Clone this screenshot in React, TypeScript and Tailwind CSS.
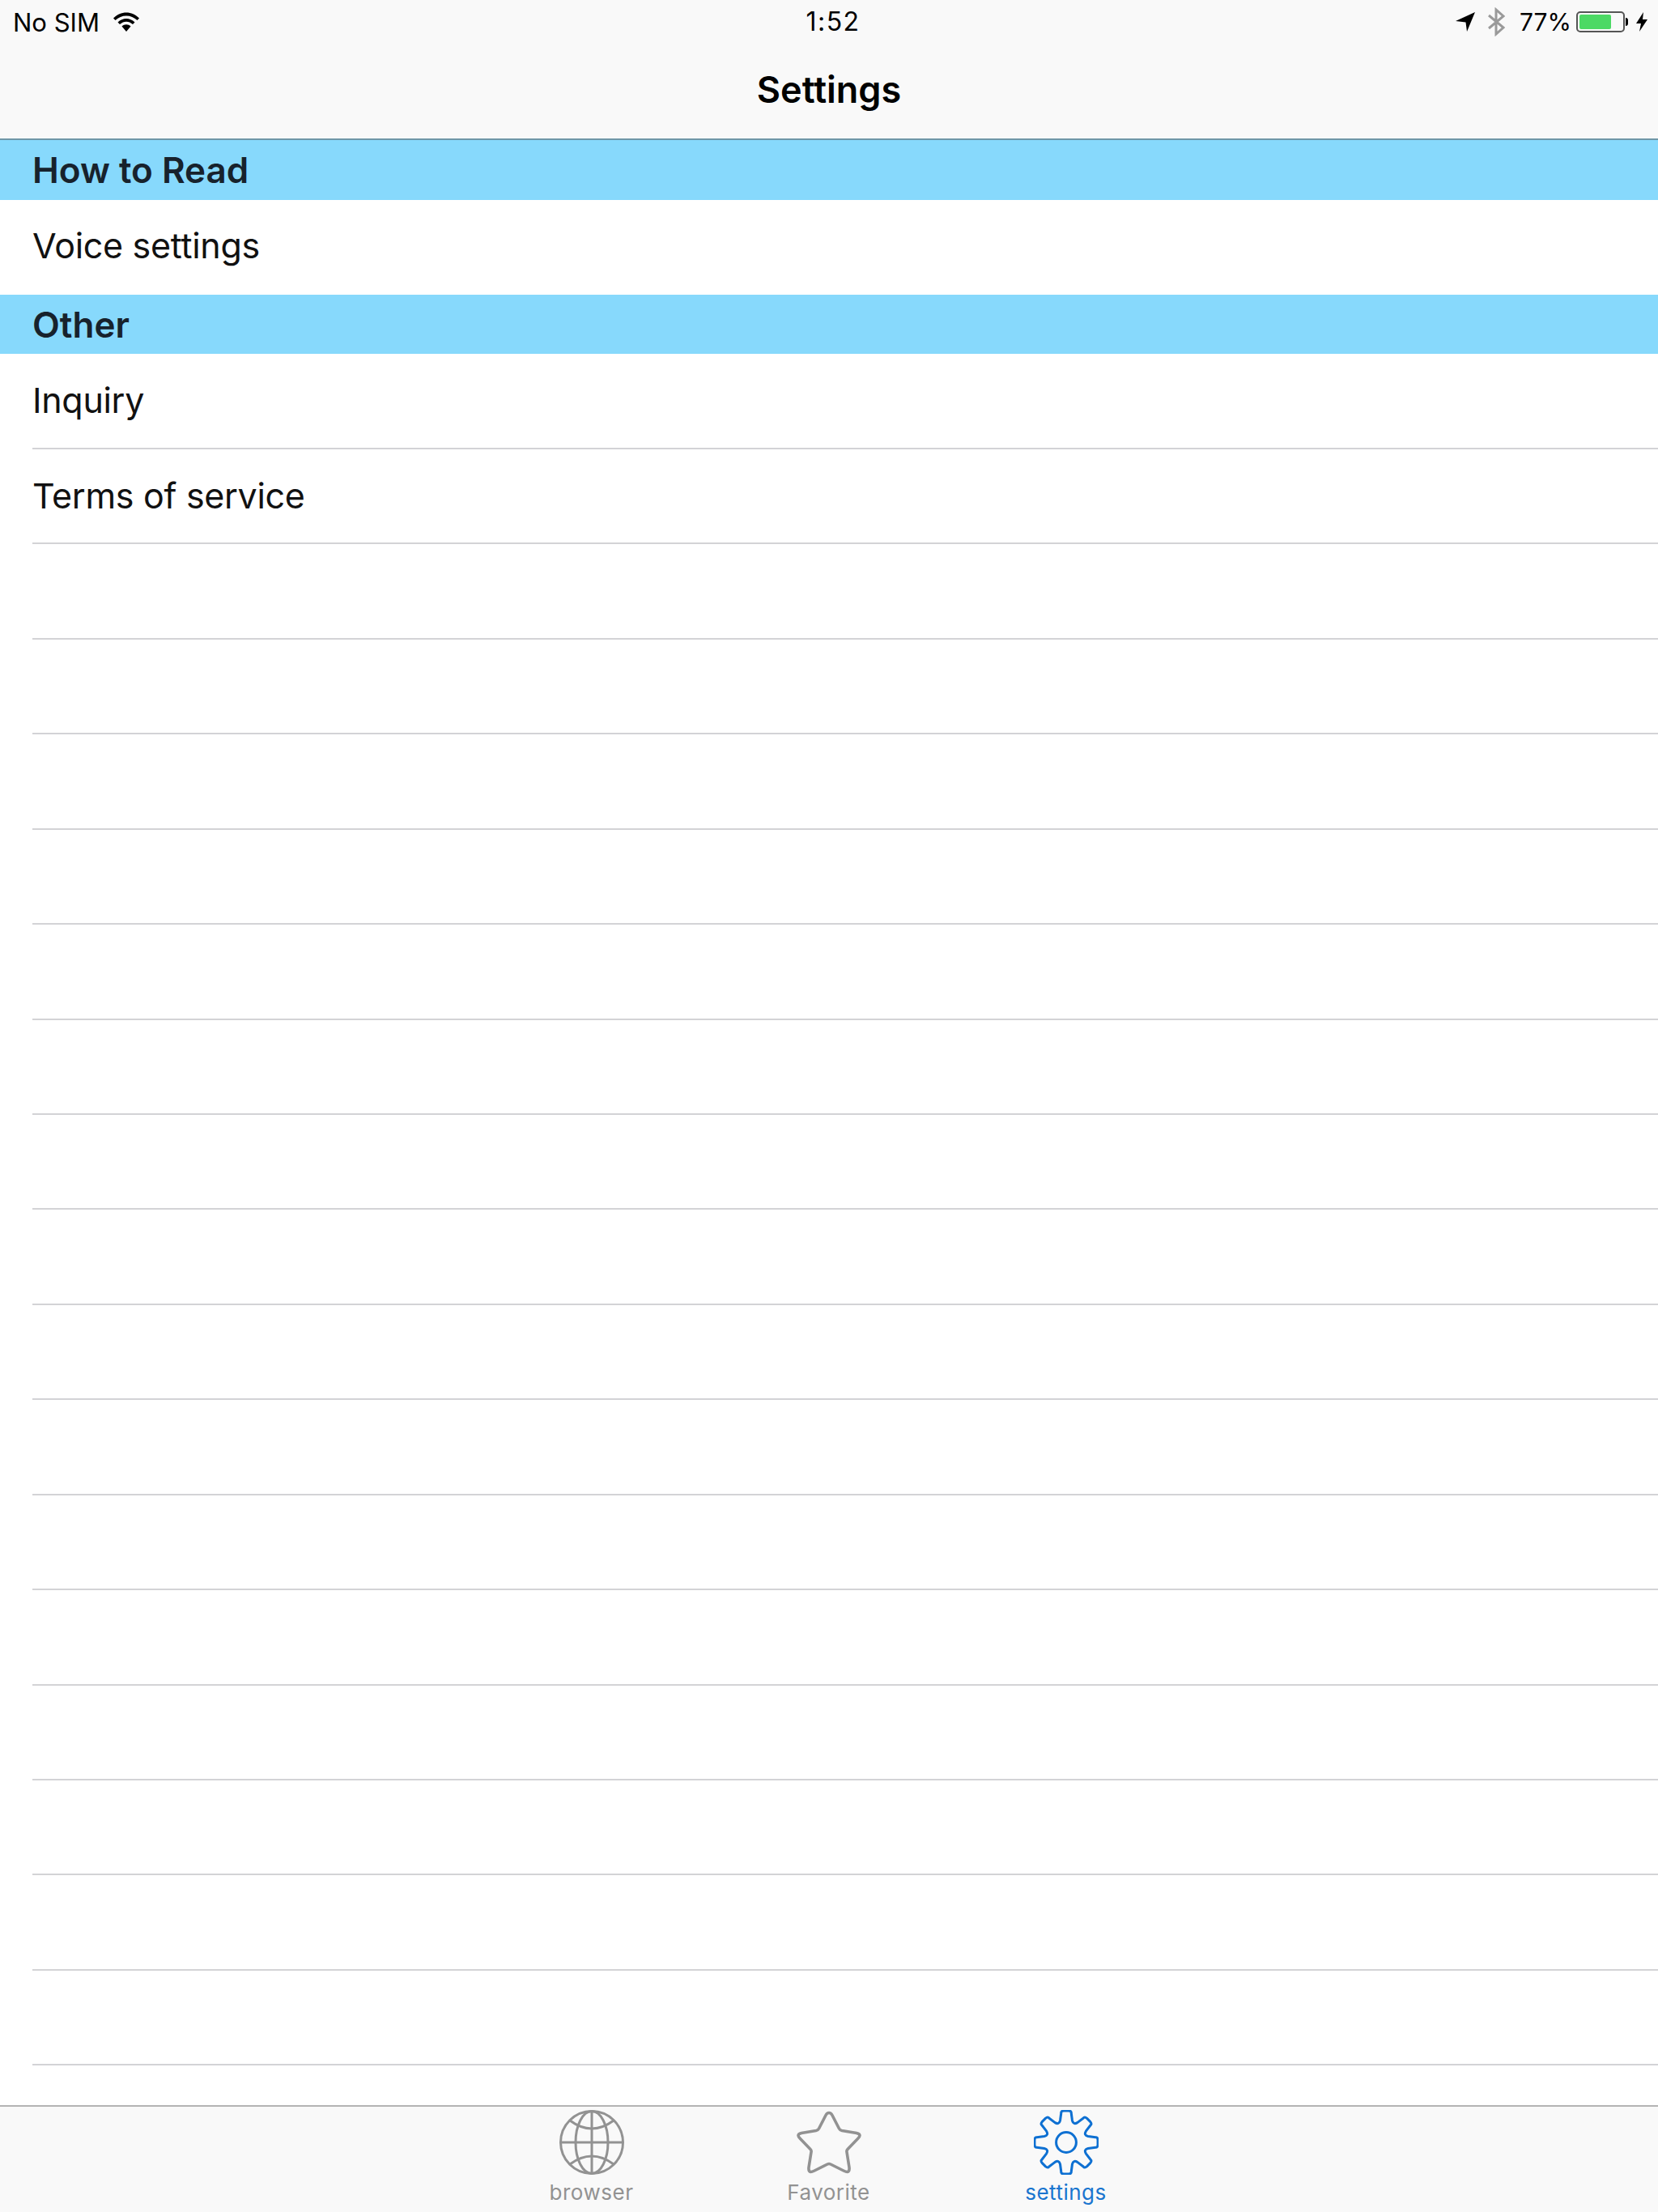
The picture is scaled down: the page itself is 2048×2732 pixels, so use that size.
const FONT = "font-['Inter','Liberation_Sans',sans-serif]";

const gearPath = (() => {
  // eight tooth cog, outline only
  const pts: string[] = [];
  const teeth = 8;
  const polar = (r: number, a: number) =>
    `${(50 + r * Math.sin(a)).toFixed(2)} ${(50 - r * Math.cos(a)).toFixed(2)}`;
  for (let i = 0; i < teeth; i++) {
    const c = (i * 2 * Math.PI) / teeth;
    const outerHalf = 0.17;
    const baseHalf = 0.27;
    pts.push(`${i === 0 ? "M" : "L"}${polar(35, c - baseHalf)}`);
    pts.push(`L${polar(46, c - outerHalf)}`);
    pts.push(`Q${polar(49, c - outerHalf)} ${polar(49, c - 0.08)}`);
    pts.push(`L${polar(49, c + 0.08)}`);
    pts.push(`Q${polar(49, c + outerHalf)} ${polar(46, c + outerHalf)}`);
    pts.push(`L${polar(35, c + baseHalf)}`);
    pts.push(`Q${polar(29, c + Math.PI / teeth)} ${polar(35, c + (2 * Math.PI) / teeth - baseHalf)}`);
  }
  return pts.join(" ") + "Z";
})();

function GlobeIcon() {
  return (
    <svg viewBox="0 0 80 80" className="h-[80px] w-[80px]" fill="none" stroke="#929292" strokeWidth="3">
      <circle cx="40" cy="40" r="38.5" />
      <path d="M40 1.5V78.5M1.5 40H78.5" />
      <ellipse cx="40" cy="40" rx="20" ry="38.5" />
      <path d="M13 13Q40 33 67 13M13 67Q40 47 67 67" />
    </svg>
  );
}

function StarIcon() {
  return (
    <svg viewBox="0 0 80 78" className="h-[78px] w-[80px]" fill="none" stroke="#929292" strokeWidth="3.6" strokeLinejoin="round">
      <path d="M40 2.5Q42.5 2.5 44 5.5L52.5 22Q53.5 24 56 24.5L74 27.5Q78 28.5 78 30.5Q78 32 75.5 34.5L63 47.5Q61.5 49 62 51L65 70Q65.5 75 62.5 75.5Q61 75.5 58 74L42 66Q40 65 38 66L22 74Q19 75.5 17.5 75.5Q14.5 75 15 70L18 51Q18.5 49 17 47.5L4.5 34.5Q2 32 2 30.5Q2 28.5 6 27.5L24 24.5Q26.5 24 27.5 22L36 5.5Q37.5 2.5 40 2.5Z" />
    </svg>
  );
}

function GearIcon() {
  return (
    <svg viewBox="0 0 100 100" className="h-[80px] w-[80px]" fill="none" stroke="#0e70d2" strokeWidth="3.8" strokeLinejoin="round">
      <path d={gearPath} />
      <circle cx="50" cy="50" r="15.5" />
    </svg>
  );
}

function StatusBar() {
  return (
    <div className="flex h-[54px] items-center text-[31px] leading-none text-black">
      <div className="flex flex-1 items-center pl-[16px]">
        <span>No SIM</span>
        <svg viewBox="0 0 32 24" className="ml-[17px] h-[24px] w-[32px]" fill="black">
          <path d="M0 7.5C9 -2 23 -2 32 7.5L29.5 10C22 2.5 10 2.5 2.5 10Z" />
          <path d="M5.5 12.5C11.5 6.5 20.5 6.5 26.5 12.5L24 15C19 10.5 13 10.5 8 15Z" />
          <path d="M10.5 17.5C13.5 14.5 18.5 14.5 21.5 17.5L16 24Z" />
        </svg>
      </div>
      <span className="ml-[7px] text-[32px] tracking-[1.5px]">1:52</span>
      <div className="flex flex-1 items-center justify-end pr-[13px]">
        <svg viewBox="0 0 24 24" className="h-[24px] w-[24px]" fill="black">
          <path d="M0 11L24 0L14 24L12.5 12.5Z" />
        </svg>
        <svg viewBox="0 0 22 36" className="ml-[15px] h-[36px] w-[22px]" fill="none" stroke="#9a9a9a" strokeWidth="3">
          <path d="M2 10L20 25L11 33V3L20 11L2 26" />
        </svg>
        <span className="ml-[18px] text-[30px]">77%</span>
        <div className="ml-[6px] flex items-center">
          <div className="h-[26px] w-[60px] rounded-[5px] border-2 border-[#555555] p-[2px]">
            <div className="h-full w-[75%] rounded-[2px] bg-[#4cd964]" />
          </div>
          <div className="ml-[1px] h-[10px] w-[3px] rounded-r-full bg-black" />
        </div>
        <svg viewBox="0 0 14 24" className="ml-[10px] h-[24px] w-[14px]" fill="black">
          <path d="M9 0L0 14H6L4 24L14 9H8Z" />
        </svg>
      </div>
    </div>
  );
}

function SectionHeader({ title }: { title: string }) {
  return (
    <div className="flex h-[73.5px] items-center bg-[#87d9fc] pl-[40px] text-[44px] font-semibold text-[#17222c]">
      {title}
    </div>
  );
}

function Row({ label, last }: { label?: string; last?: boolean }) {
  return (
    <div className="h-[117.44px] pl-[40px]">
      <div
        className={`flex h-full items-center border-b-2 pb-[1px] text-[43px] tracking-[-0.3px] text-[#111111] ${
          last ? "border-transparent" : "border-[#d3d3d6]"
        }`}
      >
        {label}
      </div>
    </div>
  );
}

function TabItem({ label, active, children }: { label: string; active?: boolean; children: React.ReactNode }) {
  return (
    <div className="flex w-[293px] flex-col items-center pt-[4px]">
      <div className="flex h-[80px] items-center">{children}</div>
      <span className={`mt-[4px] text-[26px] leading-[36px] tracking-[0.5px] ${active ? "text-[#1a75cf]" : "text-[#929292]"}`}>
        {label}
      </span>
    </div>
  );
}

export default function App() {
  const emptyRows = Array.from({ length: 16 }, (_, i) => i);
  return (
    <div className={`flex h-[2732px] w-[2048px] flex-col overflow-hidden bg-white ${FONT}`}>
      <header className="h-[173px] shrink-0 border-b-2 border-[#6f97a8] bg-[#f9f9f9]">
        <StatusBar />
        <div className="flex h-[117px] items-center justify-center pb-[4px] text-[45px] font-semibold text-black">
          Settings
        </div>
      </header>

      <main className="min-h-0 flex-1 overflow-hidden">
        <SectionHeader title="How to Read" />
        <Row label="Voice settings" last />
        <SectionHeader title="Other" />
        <Row label="Inquiry" />
        <Row label="Terms of service" />
        {emptyRows.map((i) => (
          <Row key={i} />
        ))}
      </main>

      <footer className="flex h-[132px] shrink-0 justify-center border-t-2 border-[#b4b4b4] bg-[#f9f9f9] pr-[1px]">
        <TabItem label="browser">
          <GlobeIcon />
        </TabItem>
        <TabItem label="Favorite">
          <StarIcon />
        </TabItem>
        <TabItem label="settings" active>
          <GearIcon />
        </TabItem>
      </footer>
    </div>
  );
}
